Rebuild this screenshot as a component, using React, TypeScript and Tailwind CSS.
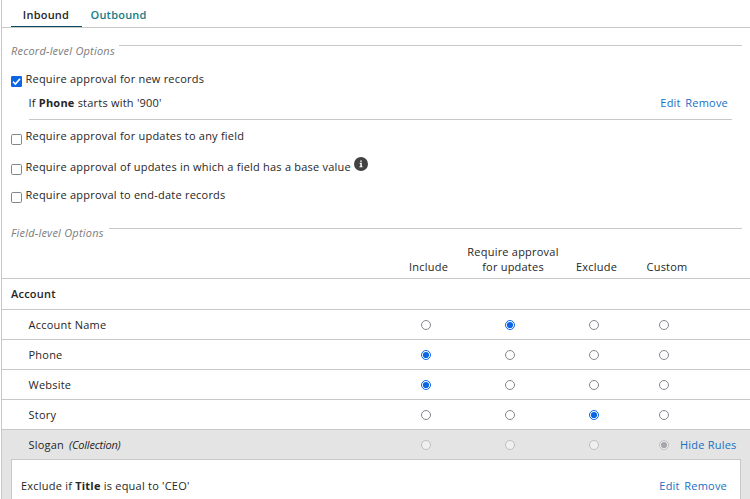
import { Fragment, type ReactNode } from "react";

const grid = "grid grid-cols-[384px_80px_88px_80px_116px]";

function Checkbox({ checked = false }: { checked?: boolean }) {
  return (
    <svg className="block size-[11px] shrink-0" viewBox="0 0 11 11" role="checkbox" aria-checked={checked}>
      {checked ? (
        <>
          <rect width="11" height="11" rx="1.3" fill="#0b66e4" />
          <path d="M2 5.7 4.4 8 9 2.9" fill="none" stroke="#fff" strokeWidth="1.6" />
        </>
      ) : (
        <rect x="0.5" y="0.5" width="10" height="10" rx="1.3" fill="#fff" stroke="#85858f" />
      )}
    </svg>
  );
}

function Radio({ checked = false, disabled = false }: { checked?: boolean; disabled?: boolean }) {
  const ring = disabled ? "#bfbfc3" : checked ? "#0b66e4" : "#85858f";
  const dot = disabled ? "#a6a6ac" : "#0b66e4";
  return (
    <svg className="block size-[10px] shrink-0" viewBox="0 0 10 10" role="radio" aria-checked={checked}>
      <circle cx="5" cy="5" r="4.5" fill={disabled ? "#f0f0f0" : "#fff"} stroke={ring} />
      {checked && <circle cx="5" cy="5" r="3.1" fill={dot} />}
    </svg>
  );
}

function Section({ title, children }: { title: string; children?: ReactNode }) {
  return (
    <div className="flex h-[16px] pl-[9px] pr-[8px]">
      <span className="shrink-0 italic text-[#7c7c7c]">{title}</span>
      {children}
    </div>
  );
}

function Actions() {
  return (
    <span className="flex gap-[4.5px] text-[#1670c4]">
      <a>Edit</a>
      <a>Remove</a>
    </span>
  );
}

const rows = [
  { name: "Account Name", value: 1 },
  { name: "Phone", value: 0 },
  { name: "Website", value: 0 },
  { name: "Story", value: 2 },
  { name: "Slogan", value: 3, rules: true },
];

export default function App() {
  return (
    <div className="h-[499px] w-[750px] overflow-hidden bg-white pl-px font-['Open_Sans','Noto_Sans',sans-serif] text-[11px] leading-[16px] tracking-[0.22px] text-[#262626]">
      <div className="h-full border-l border-[#c8c8c8]">
        <nav className="flex h-[28px] border-b border-[#c8c8c8] pl-[9px] font-semibold">
          <div className="h-[27px] w-[71px] border-b border-[#0b4a63] pr-[1px] pt-[7px] text-center">Inbound</div>
          <div className="pl-[8.5px] pt-[7px] text-[#137c87]">Outbound</div>
        </nav>

        <div className="pt-[15px]">
          <Section title="Record-level Options">
            <i className="ml-[4px] mt-[2px] h-px flex-1 bg-[#c8c8c8]" />
          </Section>
        </div>

        <div className="flex h-[24px] gap-[3.5px] pl-[9px] pt-[12px]">
          <div className="pt-[5px]"><Checkbox checked /></div>
          <span>Require approval for new records</span>
        </div>
        <div className="ml-[27px] mr-[18px] flex h-[37px] justify-between border-b border-[#c8c8c8] pr-[4px] pt-[12px]">
          <span className="-ml-[0.5px]">If <b>Phone</b> starts with '900'</span>
          <Actions />
        </div>
        <div className="flex h-[31px] gap-[3.5px] pl-[9px] pt-[8px]">
          <div className="pt-[6px]"><Checkbox /></div>
          <span>Require approval for updates to any field</span>
        </div>
        <div className="flex h-[28px] gap-[3.5px] pl-[9px] pt-[8px]">
          <div className="pt-[5px]"><Checkbox /></div>
          <span>Require approval of updates in which a field has a base value</span>
          <svg className="-mt-[2px] block size-[14px]" viewBox="0 0 14 14">
            <circle cx="7" cy="7" r="7" fill="#424242" />
            <path d="M6.2 3.5h1.6v1.3H6.2zM5.6 5.8h2.2v3.5h.7v.9H5.5v-.9h.8V6.7h-.7z" fill="#fff" />
          </svg>
        </div>
        <div className="flex h-[46px] gap-[3.5px] pl-[9px] pt-[8px]">
          <div className="pt-[5px]"><Checkbox /></div>
          <span>Require approval to end-date records</span>
        </div>

        <Section title="Field-level Options">
          <i className="ml-[5px] mt-[3px] h-px flex-1 bg-[#c8c8c8]" />
        </Section>

        <div className={`${grid} h-[38px] items-end border-b border-[#c8c8c8] pb-[4px] text-center leading-[15px]`}>
          <span />
          <span className="pl-[5px]">Include</span>
          <span className="-mr-[6px] whitespace-nowrap">Require approval<br />for updates</span>
          <span className="pl-[5px]">Exclude</span>
          <span className="w-[60px] pl-[6px]">Custom</span>
        </div>
        <div className="h-[31px] border-b border-[#c8c8c8] pl-[9px] pt-[7px] font-semibold">Account</div>

        {rows.map(({ name, value, rules }) => (
          <Fragment key={name}>
            <div className={`${grid} items-center ${rules ? "h-[29px] bg-[#e4e4e4]" : "h-[30px] border-b border-[#c8c8c8]"}`}>
              <span className="pl-[26.5px]">
                {name}
                {rules && <em className="ml-[5px] tracking-[-0.2px]">(Collection)</em>}
              </span>
              {[0, 1, 2, 3].map((i) => (
                <span key={i} className={i === 3 ? "flex items-center gap-[11px] pl-[25px]" : "flex justify-center"}>
                  <Radio checked={value === i} disabled={rules} />
                  {i === 3 && rules && <a className="whitespace-nowrap text-[#1670c4]">Hide Rules</a>}
                </span>
              ))}
            </div>
            {rules && (
              <div className="h-[40px] bg-[#e4e4e4] pl-[9px] pr-[9px]">
                <div className="flex h-full justify-between border-x border-t border-[#c8c8c8] bg-white pl-[9px] pr-[13px] pt-[18px]">
                  <span>Exclude if <b>Title</b> is equal to 'CEO'</span>
                  <Actions />
                </div>
              </div>
            )}
          </Fragment>
        ))}
      </div>
    </div>
  );
}
